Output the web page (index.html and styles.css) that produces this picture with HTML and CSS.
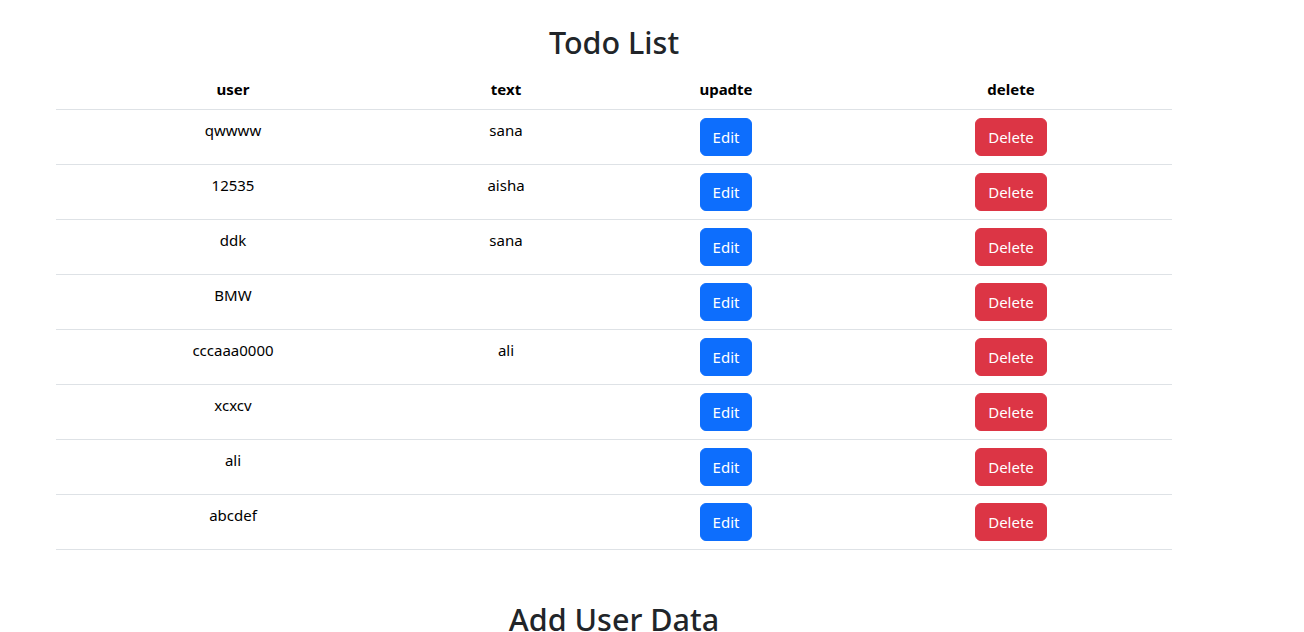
FILE: index.html
```html
<!DOCTYPE html>
<html>
<head>
<meta charset="utf-8">
<link rel="stylesheet" href="styles.css">
</head>
<body>
<div class="page">
  <h2 class="title">Todo List</h2>
  <table class="todo-table">
    <colgroup>
      <col class="c1"><col class="c2"><col class="c3"><col class="c4">
    </colgroup>
    <thead>
      <tr><th>user</th><th>text</th><th>upadte</th><th>delete</th></tr>
    </thead>
    <tbody>
      <tr><td>qwwww</td><td>sana</td><td><button class="btn btn-edit">Edit</button></td><td><button class="btn btn-delete">Delete</button></td></tr>
      <tr><td>12535</td><td>aisha</td><td><button class="btn btn-edit">Edit</button></td><td><button class="btn btn-delete">Delete</button></td></tr>
      <tr><td>ddk</td><td>sana</td><td><button class="btn btn-edit">Edit</button></td><td><button class="btn btn-delete">Delete</button></td></tr>
      <tr><td>BMW</td><td></td><td><button class="btn btn-edit">Edit</button></td><td><button class="btn btn-delete">Delete</button></td></tr>
      <tr><td>cccaaa0000</td><td>ali</td><td><button class="btn btn-edit">Edit</button></td><td><button class="btn btn-delete">Delete</button></td></tr>
      <tr><td>xcxcv</td><td></td><td><button class="btn btn-edit">Edit</button></td><td><button class="btn btn-delete">Delete</button></td></tr>
      <tr><td>ali</td><td></td><td><button class="btn btn-edit">Edit</button></td><td><button class="btn btn-delete">Delete</button></td></tr>
      <tr><td>abcdef</td><td></td><td><button class="btn btn-edit">Edit</button></td><td><button class="btn btn-delete">Delete</button></td></tr>
    </tbody>
  </table>
  <h2 class="title title-add">Add User Data</h2>
</div>
</body>
</html>
```
FILE: styles.css
```css
html, body {
  margin: 0;
  padding: 0;
  background: #fff;
}
body {
  font-family: "Noto Sans", "Open Sans", sans-serif;
  font-size: 16px;
  line-height: 24px;
  color: #212529;
}
.page {
  width: 1116px;
  margin-left: 56px;
  padding-top: 23px;
}
.title {
  margin: 0 0 8px 0;
  text-align: center;
  font-size: 30.5px;
  line-height: 38px;
  font-weight: 500;
  color: #212529;
}
.title-add {
  margin-top: 50px;
}
.todo-table {
  width: 1116px;
  border-collapse: collapse;
  table-layout: fixed;
  color: #000;
}
.c1 { width: 354px; }
.c2 { width: 192px; }
.c3 { width: 248px; }
.c4 { width: 322px; }
.todo-table th,
.todo-table td {
  padding: 8px;
  text-align: center;
  vertical-align: top;
  border-bottom: 1px solid #dee2e6;
  font-size: 15px;
}
.todo-table th {
  font-weight: 700;
}
.btn {
  display: inline-block;
  height: 38px;
  padding: 6px 12px;
  border: 1px solid transparent;
  border-radius: 6px;
  font-family: inherit;
  font-size: 15px;
  line-height: 24px;
  color: #fff;
  cursor: pointer;
}
.btn-edit {
  background: #0d6efd;
  border-color: #0d6efd;
}
.btn-delete {
  background: #dc3545;
  border-color: #dc3545;
}
```
